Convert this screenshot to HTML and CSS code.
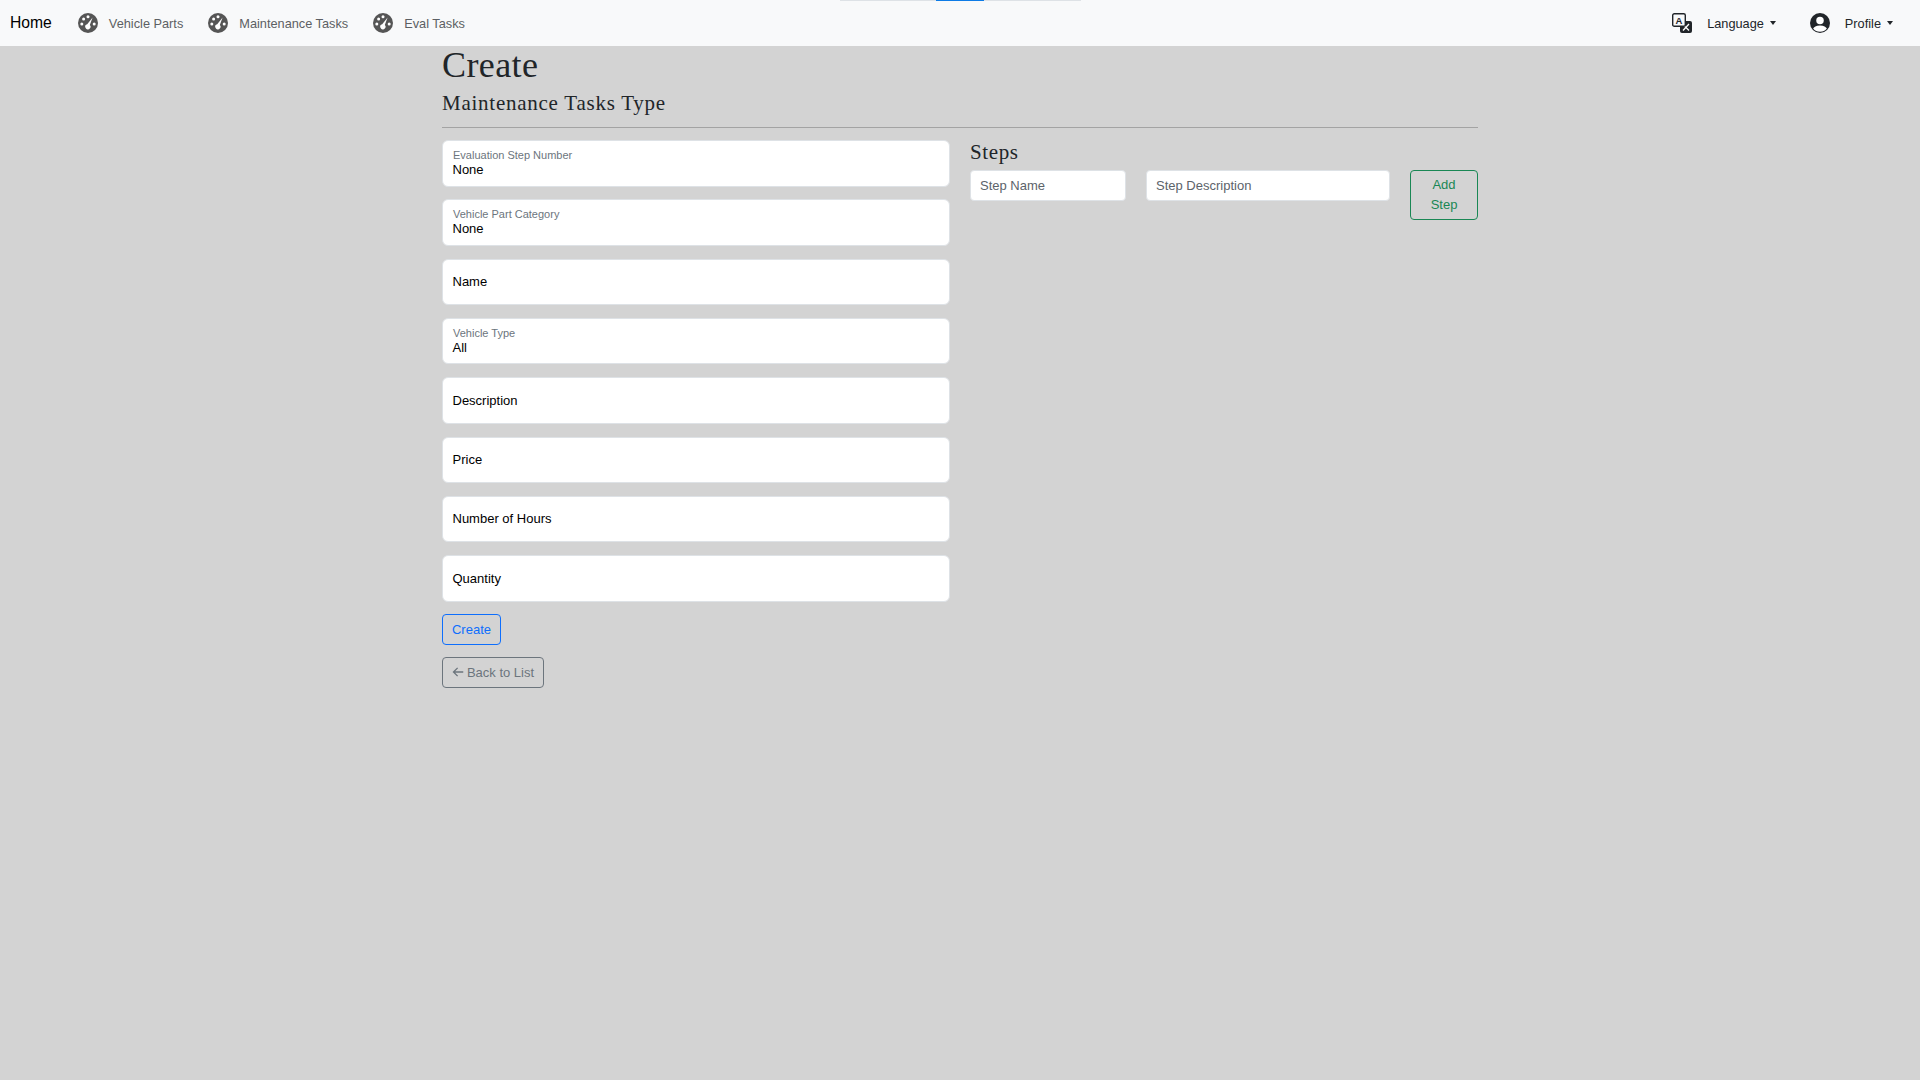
FILE: index.html
```html
<!DOCTYPE html>
<html lang="en">
<head>
    <meta charset="UTF-8">
    <meta name="viewport" content="width=device-width, initial-scale=1.0">
    <title>Create</title>
    <link rel="stylesheet" href="styles.css">
</head>
<body>
    <!-- page load indicator -->
    <div class="loadBar"><span class="loadBarValue"></span></div>

    <nav class="navbar">
        <div class="navLeft">
            <a class="brand" href="#">Home</a>
            <a class="navLink" href="#">
                <svg class="navIcon" viewBox="0 0 20 20"><circle cx="10" cy="10" r="10" fill="#555"/><circle cx="3.8" cy="11" r="1.5" fill="#fff"/><circle cx="5.6" cy="6" r="1.5" fill="#fff"/><circle cx="10" cy="3.8" r="1.5" fill="#fff"/><circle cx="16.2" cy="11" r="1.5" fill="#fff"/><path d="M14.6 4.4 11.8 12a2.6 2.6 0 1 1-2.6-.8z" fill="#fff"/></svg>
                Vehicle Parts
            </a>
            <a class="navLink" href="#">
                <svg class="navIcon" viewBox="0 0 20 20"><circle cx="10" cy="10" r="10" fill="#555"/><circle cx="3.8" cy="11" r="1.5" fill="#fff"/><circle cx="5.6" cy="6" r="1.5" fill="#fff"/><circle cx="10" cy="3.8" r="1.5" fill="#fff"/><circle cx="16.2" cy="11" r="1.5" fill="#fff"/><path d="M14.6 4.4 11.8 12a2.6 2.6 0 1 1-2.6-.8z" fill="#fff"/></svg>
                Maintenance Tasks
            </a>
            <a class="navLink" href="#">
                <svg class="navIcon" viewBox="0 0 20 20"><circle cx="10" cy="10" r="10" fill="#555"/><circle cx="3.8" cy="11" r="1.5" fill="#fff"/><circle cx="5.6" cy="6" r="1.5" fill="#fff"/><circle cx="10" cy="3.8" r="1.5" fill="#fff"/><circle cx="16.2" cy="11" r="1.5" fill="#fff"/><path d="M14.6 4.4 11.8 12a2.6 2.6 0 1 1-2.6-.8z" fill="#fff"/></svg>
                Eval Tasks
            </a>
        </div>
        <div class="navRight">
            <a class="menuLink menuLanguage" href="#">
                <svg class="navIcon" viewBox="0 0 20 20">
                    <rect x="8" y="8" width="12" height="12" rx="2" fill="#212529"/>
                    <path d="M11 17.5 17 11M12 12.5l5 5" stroke="#fff" stroke-width="1.3" fill="none"/>
                    <rect x=".7" y=".7" width="12.6" height="12.6" rx="1.6" fill="#f8f9fa" stroke="#212529" stroke-width="1.4"/>
                    <text x="7" y="10.6" class="iconLetter">A</text>
                </svg>
                <span class="menuText">Language</span>
                <span class="caret"></span>
            </a>
            <a class="menuLink" href="#">
                <svg class="navIcon" viewBox="0 0 16 16"><circle cx="8" cy="8" r="8" fill="#212529"/><circle cx="8" cy="6" r="3" fill="#fff"/><path d="M2.5 12.4C3.2 11.2 4.8 10 8 10s4.8 1.2 5.5 2.4A7 7 0 0 1 8 15a7 7 0 0 1-5.500-2.600z" fill="#fff"/></svg>
                <span class="menuText">Profile</span>
                <span class="caret"></span>
            </a>
        </div>
    </nav>

    <main class="container">
        <h1 class="pageTitle">Create</h1>
        <h4 class="pageSubtitle">Maintenance Tasks Type</h4>
        <hr class="divider">

        <div class="formRow">
            <form class="taskForm">
                <div class="field fieldSelect">
                    <span class="fieldLabel">Evaluation Step Number</span>
                    <span class="fieldValue">None</span>
                </div>
                <div class="field fieldSelect">
                    <span class="fieldLabel">Vehicle Part Category</span>
                    <span class="fieldValue">None</span>
                </div>
                <div class="field"><span class="fieldPlaceholder">Name</span></div>
                <div class="field fieldSelect">
                    <span class="fieldLabel">Vehicle Type</span>
                    <span class="fieldValue">All</span>
                </div>
                <div class="field"><span class="fieldPlaceholder">Description</span></div>
                <div class="field"><span class="fieldPlaceholder">Price</span></div>
                <div class="field"><span class="fieldPlaceholder">Number of Hours</span></div>
                <div class="field"><span class="fieldPlaceholder">Quantity</span></div>

                <div class="formActions">
                    <a class="btn btnCreate" href="#">Create</a>
                    <a class="btn btnBack" href="#">
                        <svg class="backIcon" viewBox="0 0 16 16"><path d="M15 8H2M7.500 2.500 2 8l5.500 5.500" fill="none" stroke="#6c757d" stroke-width="1.800"/></svg>
                        Back to List
                    </a>
                </div>
            </form>

            <section class="steps">
                <h5 class="stepsTitle">Steps</h5>
                <div class="stepsRow">
                    <input class="stepInput stepName" type="text" placeholder="Step Name">
                    <input class="stepInput stepDescription" type="text" placeholder="Step Description">
                    <a class="btn btnAdd" href="#">Add Step</a>
                </div>
            </section>
        </div>
    </main>
</body>
</html>
```

FILE: styles.css
```css
* {
    margin: 0;
    padding: 0;
    box-sizing: border-box;
}

body {
    min-height: 1080px;
    background-color: #d3d3d3;
    color: #212529;
    font-family: "Liberation Sans", Arial, sans-serif;
    font-size: 13px;
}

a {
    text-decoration: none;
}

.loadBar {
    position: absolute;
    top: 0;
    left: 840px;
    width: 241px;
    height: 1px;
    background-color: #dee2e6;
}

.loadBarValue {
    display: block;
    width: 48px;
    height: 1px;
    margin-left: 96px;
    background-color: #0d7be6;
}

.navbar {
    display: flex;
    justify-content: space-between;
    align-items: center;
    height: 46px;
    padding: 0 27px 0 10px;
    background-color: #f8f9fa;
}

.navLeft,
.navRight {
    display: flex;
    align-items: center;
}

.brand {
    margin-right: 26px;
    color: #000;
    font-size: 15.7px;
}

.navLink {
    display: flex;
    align-items: center;
    gap: 11px;
    margin-right: 25px;
    color: #5c5f63;
    font-size: 12.75px;
}

.navIcon {
    display: block;
    flex: none;
    width: 20px;
    height: 20px;
}

.iconLetter {
    fill: #212529;
    font-family: "Liberation Sans", Arial, sans-serif;
    font-size: 9.5px;
    font-weight: 700;
    text-anchor: middle;
}

.menuLink {
    display: flex;
    align-items: center;
    color: #212529;
    font-size: 12.75px;
}

.menuLanguage {
    margin-right: 34px;
}

.menuText {
    margin-left: 15px;
}

.caret {
    width: 0;
    height: 0;
    margin-left: 6px;
    border-top: 4px solid #212529;
    border-left: 3.5px solid transparent;
    border-right: 3.5px solid transparent;
}

.container {
    width: 1036px;
    margin: 0 auto;
    padding-top: 1px;
}

.pageTitle {
    font-family: "Liberation Serif", "DejaVu Serif", serif;
    font-size: 36px;
    font-weight: 400;
    letter-spacing: 0.4px;
    line-height: 36px;
}

.pageSubtitle {
    margin-top: 7px;
    font-family: "Liberation Serif", "DejaVu Serif", serif;
    font-size: 21px;
    font-weight: 400;
    letter-spacing: 0.75px;
    line-height: 26px;
}

.divider {
    height: 1px;
    margin: 11px 0 12px;
    border: 0;
    background-color: #a3a3a3;
}

.formRow {
    display: grid;
    grid-template-columns: 508px 508px;
    column-gap: 20px;
}

.taskForm {
    display: flex;
    flex-direction: column;
}

.field {
    display: flex;
    flex-direction: column;
    justify-content: center;
    height: 46.5px;
    margin-bottom: 12.83px;
    padding: 0 9.5px;
    border: 1px solid #dee2e6;
    border-radius: 6px;
    background-color: #fff;
    color: #000;
}

.fieldSelect {
    padding-bottom: 1px;
}

.fieldLabel {
    margin-left: 0.5px;
    color: #6c757d;
    font-size: 11px;
    line-height: 14px;
}

.fieldValue {
    line-height: 16px;
}

.fieldPlaceholder {
    line-height: 20px;
}

.formActions {
    display: flex;
    flex-direction: column;
    align-items: flex-start;
    gap: 12px;
    margin-top: -1px;
}

.btn {
    display: block;
    border: 1px solid;
    border-radius: 4px;
    text-align: center;
}

.btnCreate {
    width: 59px;
    height: 31px;
    border-color: #0d6efd;
    color: #0d6efd;
    line-height: 29px;
}

.btnBack {
    display: flex;
    align-items: center;
    justify-content: center;
    gap: 3px;
    width: 102px;
    height: 31px;
    border-color: #6c757d;
    color: #6c757d;
}

.backIcon {
    display: block;
    width: 12px;
    height: 12px;
}

.stepsTitle {
    margin-bottom: 6px;
    font-family: "Liberation Serif", "DejaVu Serif", serif;
    font-size: 21px;
    font-weight: 400;
    letter-spacing: 0.6px;
    line-height: 24px;
}

.stepsRow {
    display: flex;
    justify-content: space-between;
    align-items: flex-start;
}

.stepInput {
    height: 31px;
    padding: 0 9px;
    border: 1px solid #dee2e6;
    border-radius: 4px;
    background-color: #fff;
    font-family: "Liberation Sans", Arial, sans-serif;
    font-size: 13px;
}

.stepInput::placeholder {
    color: #5c636a;
    opacity: 1;
}

.stepName {
    width: 156px;
}

.stepDescription {
    width: 244px;
}

.btnAdd {
    width: 68px;
    height: 50px;
    padding: 4px 12px;
    border-color: #198754;
    color: #198754;
    line-height: 20px;
}
```
